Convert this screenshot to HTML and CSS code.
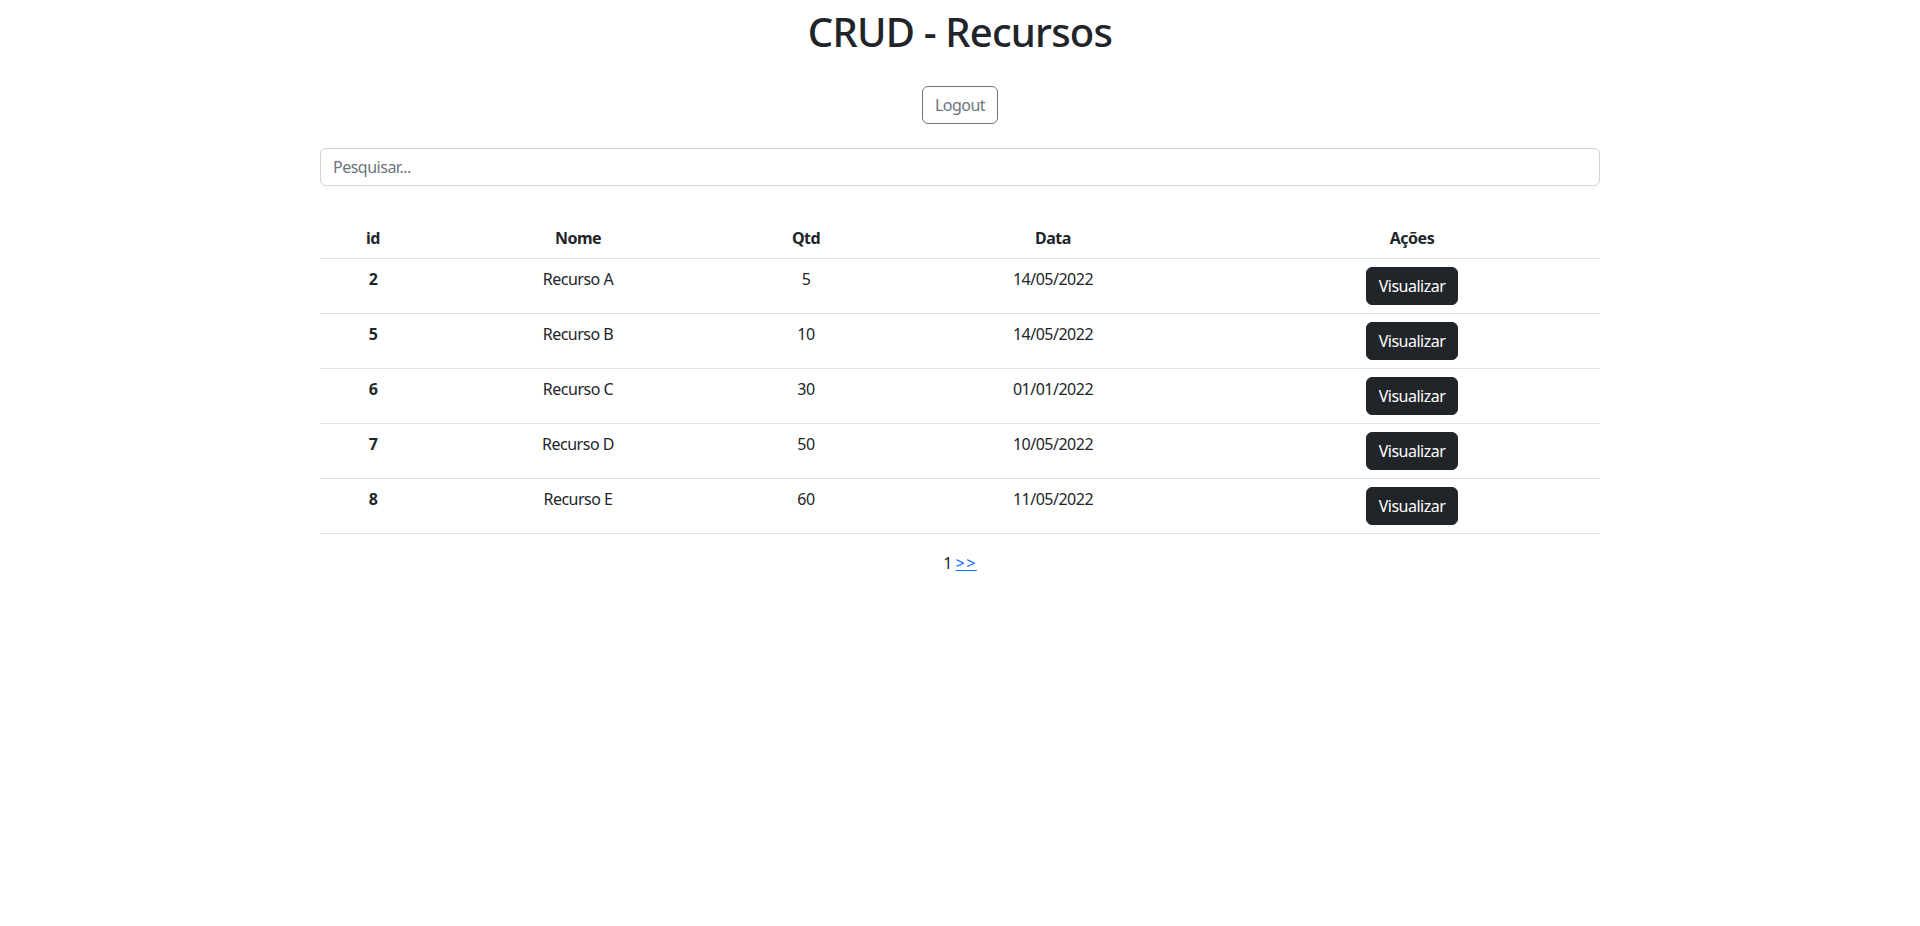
FILE: index.html
```html
<!DOCTYPE html>
<html lang="pt-BR">
<head>
<meta charset="utf-8">
<title>CRUD - Recursos</title>
<link rel="stylesheet" href="styles.css">
</head>
<body>
<div class="page">
  <h1 class="title">CRUD - Recursos</h1>
  <div class="logout-wrap">
    <button class="btn btn-outline" type="button">Logout</button>
  </div>
  <input class="search" type="text" placeholder="Pesquisar...">
  <table class="table">
    <thead>
      <tr>
        <th class="c-id">id</th>
        <th class="c-nome">Nome</th>
        <th class="c-qtd">Qtd</th>
        <th class="c-data">Data</th>
        <th class="c-acoes">Ações</th>
      </tr>
    </thead>
    <tbody>
      <tr><th>2</th><td>Recurso A</td><td>5</td><td>14/05/2022</td><td><button class="btn btn-dark" type="button">Visualizar</button></td></tr>
      <tr><th>5</th><td>Recurso B</td><td>10</td><td>14/05/2022</td><td><button class="btn btn-dark" type="button">Visualizar</button></td></tr>
      <tr><th>6</th><td>Recurso C</td><td>30</td><td>01/01/2022</td><td><button class="btn btn-dark" type="button">Visualizar</button></td></tr>
      <tr><th>7</th><td>Recurso D</td><td>50</td><td>10/05/2022</td><td><button class="btn btn-dark" type="button">Visualizar</button></td></tr>
      <tr><th>8</th><td>Recurso E</td><td>60</td><td>11/05/2022</td><td><button class="btn btn-dark" type="button">Visualizar</button></td></tr>
    </tbody>
  </table>
  <div class="pager"><span class="cur">1</span> <a href="#" class="next">&gt;&gt;</a></div>
</div>
</body>
</html>
```

FILE: styles.css
```css
* { box-sizing: border-box; }
html, body { margin: 0; padding: 0; background: #fff; }
body {
  font-family: "Noto Sans", "Open Sans", sans-serif;
  font-size: 16px;
  line-height: 1.5;
  letter-spacing: -0.5px;
  color: #212529;
}
.page {
  width: 1280px;
  margin: 0 auto;
  display: flex;
  flex-direction: column;
  align-items: stretch;
}
.title {
  margin: 8px 0 0;
  font-size: 40px;
  line-height: 48px;
  font-weight: 500;
  letter-spacing: -0.8px;
  text-align: center;
}
.logout-wrap {
  margin-top: 30px;
  display: flex;
  justify-content: center;
}
.btn {
  font-family: inherit;
  font-size: 16px;
  line-height: 24px;
  letter-spacing: -0.5px;
  padding: 6px 12px;
  border-radius: 6px;
  border: 1px solid transparent;
  cursor: pointer;
}
.btn-outline {
  background: #fff;
  color: #6c757d;
  border-color: #6c757d;
}
.btn-dark {
  background: #212529;
  color: #fff;
  border-color: #212529;
}
.search {
  margin-top: 24px;
  width: 100%;
  height: 38px;
  padding: 6px 12px;
  font-family: inherit;
  font-size: 16px;
  line-height: 24px;
  letter-spacing: -0.5px;
  color: #212529;
  border: 1px solid #ced4da;
  border-radius: 6px;
  outline: none;
}
.search::placeholder { color: #6c757d; }
.table {
  margin-top: 32px;
  width: 100%;
  border-collapse: collapse;
  table-layout: fixed;
  text-align: center;
  vertical-align: top;
}
.table th, .table td {
  padding: 8px;
  border-bottom: 1px solid #dee2e6;
  vertical-align: top;
}
.table thead th { font-weight: 700; }
.table tbody th { font-weight: 700; }
.c-id { width: 106px; }
.c-nome { width: 304px; }
.c-qtd { width: 152px; }
.c-data { width: 342px; }
.c-acoes { width: 376px; }
.pager {
  margin-top: 17px;
  text-align: center;
}
.next { color: #0d6efd; text-decoration: underline; letter-spacing: 1.5px; }
```
